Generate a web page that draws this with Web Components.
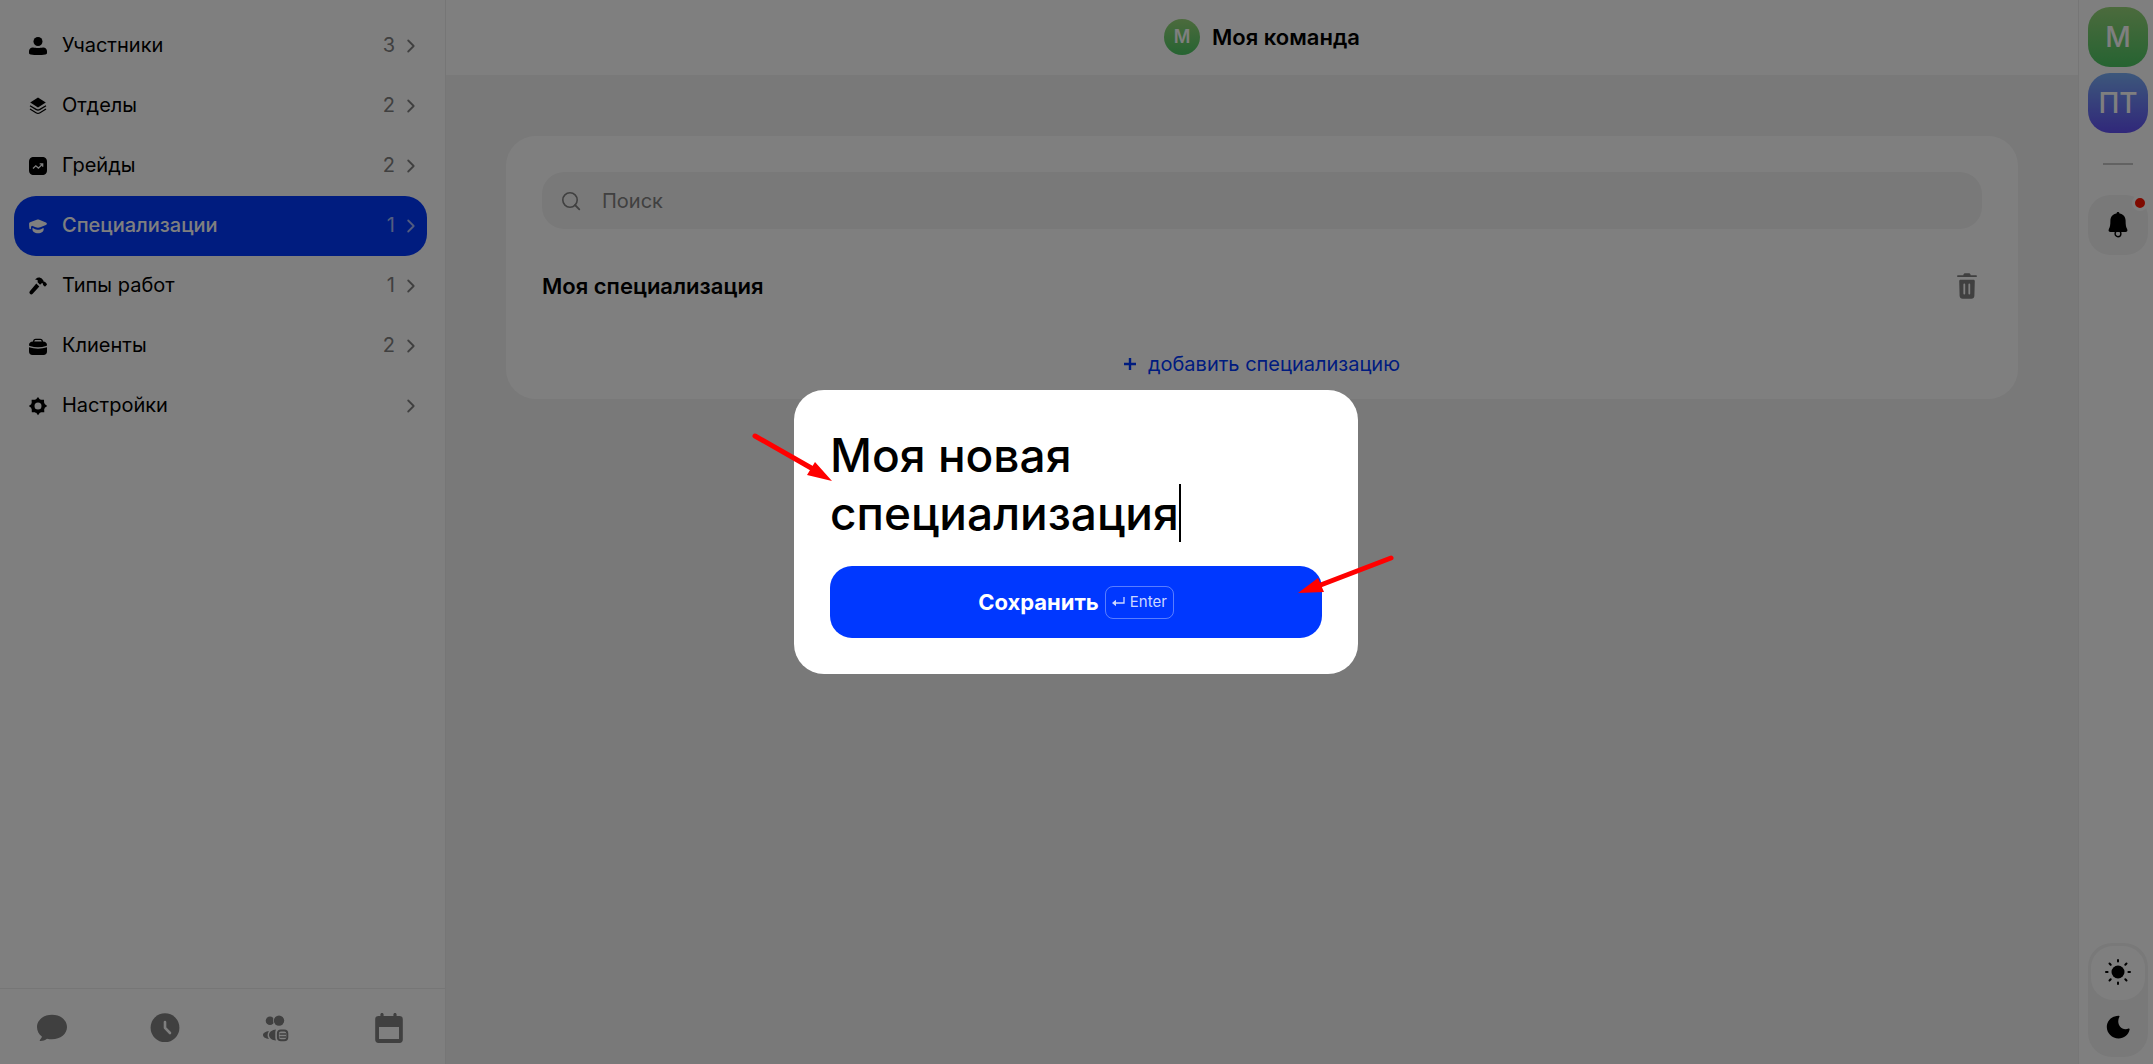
<!DOCTYPE html>
<html lang="ru">
<head>
<meta charset="utf-8">
<meta name="viewport" content="width=device-width, initial-scale=1">
<title>Моя команда</title>
<style>
  html, body { margin: 0; height: 100%; }
  body {
    font-family: Inter, "Liberation Sans", sans-serif;
    font-size: 20px; line-height: 24px; color: #000; background: #f3f3f3;
    --accent: #0038ff; --muted: #808080; --soft: #f3f3f3; --line: #ececec;
    --green: linear-gradient(#98d67a, #4cc764); --violet: linear-gradient(#7aaff7, #6150f5);
  }
</style>
</head>
<body>
<app-shell>
  <side-nav slot="nav">
    <nav-item icon="user" count="3">Участники</nav-item>
    <nav-item icon="layers" count="2">Отделы</nav-item>
    <nav-item icon="grade" count="2">Грейды</nav-item>
    <nav-item icon="cap" count="1" active>Специализации</nav-item>
    <nav-item icon="hammer" count="1">Типы работ</nav-item>
    <nav-item icon="case" count="2">Клиенты</nav-item>
    <nav-item icon="gear">Настройки</nav-item>
    <bottom-tabs slot="footer"></bottom-tabs>
  </side-nav>
  <team-header slot="header" initial="М">Моя команда</team-header>
  <spec-list>
    <spec-row>Моя специализация</spec-row>
  </spec-list>
  <team-rail slot="rail"></team-rail>
</app-shell>
<modal-layer>
  <name-dialog value="Моя новая специализация"></name-dialog>
  <pointer-marks slot="marks"></pointer-marks>
</modal-layer>

<script>
const ICONS = {
  user: ['0 0 18 18', '<circle cx="9" cy="4.5" r="4.5"/><path d="M0 14c0-2.300 2-3.800 4-3.600 1.800.1 3 .6 5 .6s3.200-.5 5-.6c2-.2 4 1.300 4 3.600v2c0 .9-.7 1.400-1.600 1.500C14 17.900 11.500 18 9 18s-5-.1-7.400-.5C.7 17.400 0 16.900 0 16z"/>'],
  layers: ['0 0 18 18', '<path d="M9 .6 16.800 5.500 9 10.600 1.200 5.500z"/><path d="M1 8.700 7 12.400c1.300.8 2.700.8 4 0l6-3.700M1 12l6 3.700c1.300.8 2.700.8 4 0l6-3.700" fill="none" stroke="currentColor" stroke-width="1.300"/>'],
  grade: ['0 0 18 18', '<path fill-rule="evenodd" d="M5 0h8c3.500 0 5 1.500 5 5v8c0 3.500-1.500 5-5 5H5c-3.500 0-5-1.500-5-5V5c0-3.500 1.500-5 5-5z"/><path d="M4 11.500 6.800 8.800l2.600 2.300 4-3.800M10.700 6.800h3v3" fill="none" stroke="#fff" stroke-width="1.300"/>'],
  cap: ['0 0 18 18', '<path d="M7.700 2.700c.8-.3 1.800-.3 2.600 0l6.600 2.700c1.300.6 1.300 2 0 2.600l-5.600 2.300c-1.400.6-3.200.6-4.600 0L3 8.800c-1 .6-1 1.200-1 2.700 0 .9-1.500.9-1.600 0C.2 9.500.1 9 .1 7c0-1 .3-1.400 1-1.700z"/><path d="M3.500 11c1 .3 2.400 1.200 3.600 1.500 1.400.3 2.600.3 4 0 1.200-.3 2.500-1.200 3.500-1.500.3 1.600 0 3-1.300 4-2.200 1.700-6.400 1.700-8.500 0-1.300-1-1.500-2.400-1.300-4z"/>'],
  hammer: ['0 0 19 18', '<path d="M7 1.600C9.600-.5 12-.2 13.900 1.700l1.300 1.500c.2.300 0 .8.300 1.100.5.500 1.100-.1 1.500.4l1.700 1.900c.4.500.3 1-.1 1.400l-1.200 1.200c-.5.500-1.100.4-1.500-.1l-1-1.200c-.5-.5.2-1-.3-1.500-.4-.4-1 0-1.400-.2l-1.500 1.500-2.800-2.800.5-1.200C9 2.600 8.200 2.500 7.200 2.500c-.6 0-.6-.6-.2-.9z"/><path d="m7.700 6.300 3.200 3.200-7 7.700c-.8.900-2.100.9-2.900.1-.8-.8-.8-2.100.1-2.900z"/>'],
  case: ['0 0 18 18', '<path fill-rule="evenodd" d="M4 4.600C4 2.800 5 1.700 6.800 1.700h4.400C13 1.700 14 2.800 14 4.600c2.400 0 4 1.500 4 3.400 0 .6-.3.900-.9 1.100-5 1.600-11.200 1.600-16.200 0C.3 8.900 0 8.600 0 8c0-1.900 1.600-3.400 4-3.400zm1.300 0h7.400c0-1-.6-1.600-1.500-1.600H6.800c-.9 0-1.500.6-1.500 1.600z"/><path d="M0 10.300c5.600 1.900 12.400 1.900 18 0v4.200c0 2.200-1.300 3.500-3.500 3.500h-11C1.300 18 0 16.700 0 14.500z"/>'],
  gear: ['0 0 18 18', '<path fill-rule="evenodd" d="M9 0l1.700 2.300c.5.100.9.300 1.300.5l3-.1.100 2.900c.3.500.5 1 .6 1.500L18.200 9l-2.400 1.800c-.1.500-.3 1-.6 1.400l.1 3-3 .1c-.5.300-.9.400-1.400.5L9 18.200l-1.800-2.400c-.5-.1-1-.3-1.400-.6l-3 .1-.1-3c-.300-.5-.4-1-.6-1.500L-.2 9l2.400-1.800c.1-.5.300-1 .5-1.500l-.1-3 3.100.1c.5-.2 1-.4 1.400-.5zM9 5.500a3.500 3.500 0 1 0 0 7 3.500 3.500 0 1 0 0-7z"/>'],
  chevron: ['0 0 8 14', '<path d="M1.200 1.500 6.700 7l-5.500 5.500" fill="none" stroke="currentColor" stroke-width="1.800" stroke-linecap="round" stroke-linejoin="round"/>'],
  chat: ['0 0 30 30', '<path d="M15 1.800c8.500 0 15 5.300 15 12.200s-6.500 12.300-15 12.300c-1.800 0-3.400-.2-5-.6-2 1.600-4.500 2.300-6.800 2.200-.6 0-.7-.6-.3-1 1-1 1.800-2.100 2-3.300C1.900 21.300 0 17.900 0 14 0 7.100 6.500 1.800 15 1.800z"/>'],
  clock: ['0 0 30 30', '<circle cx="15" cy="14.700" r="14.400"/><path d="M15 9v5.800l5 5.200" fill="none" stroke="#fff" stroke-width="2.600" stroke-linecap="round" stroke-linejoin="round"/>'],
  people: ['1 0 30 30', '<circle cx="9" cy="7.800" r="4.300"/><circle cx="18" cy="7.600" r="6" fill="#fff"/><circle cx="18" cy="7.600" r="5.200"/><path d="M8 18.300C4.500 18.400 2 20 2 22.100s2.500 3.700 6 3.800c-1.900-2-1.900-5.400 0-7.600z"/><path d="M15 16.600C11 17 8 19.200 8 22s3 5.200 7 5.600c-.5-1-.7-2-.7-3v-4.800c0-1.200.2-2.200.7-3.200z"/><rect x="16.900" y="17.400" width="9.400" height="9.800" rx="3" fill="none" stroke="currentColor" stroke-width="2"/><path d="M18.500 21.100h6.500M18.500 23.900h6.500" stroke="currentColor" stroke-width="1.500"/>'],
  calendar: ['0 0 30 30', '<path fill-rule="evenodd" d="M7 0c1 0 1.600.7 1.600 1.600V3h9.800V1.600C18.400.7 19 0 20 0s1.600.7 1.600 1.600V3h3c2 0 3.200 1.200 3.200 3.200v20.600c0 2-1.200 3.200-3.200 3.200H3.400C1.400 30 .2 28.800.2 26.800V6.200C.2 4.200 1.400 3 3.400 3h2V1.600C5.400.7 6 0 7 0zM4 14v12h20V14z"/>'],
  search: ['0 0 18 18', '<circle cx="8" cy="8" r="7.200" fill="none" stroke="currentColor" stroke-width="1.600"/><path d="m13 13 4.300 4.300" stroke="currentColor" stroke-width="1.800" stroke-linecap="round"/>'],
  trash: ['0 0 20 26', '<path d="M.8 2.300h5.500C6.500.9 7.200.3 8.300.3h3.400c1.100 0 1.800.6 2 2h5.500c1 0 1 1.800 0 1.800H.8c-1 0-1-1.800 0-1.800z"/><path fill-rule="evenodd" d="M3.500 6.700h13c.8 0 1.300.6 1.300 1.400l-.4 14.700c-.1 1.900-1.200 3-3 3H5.600c-1.800 0-2.900-1.100-3-3L2.200 8.100c0-.8.5-1.400 1.300-1.400zM7.300 10.500c-.6 0-.9.300-.9.900v9.200c0 .6.300.9.900.9s.9-.3.900-.9v-9.200c0-.6-.3-.9-.9-.9zm5 0c-.6 0-.9.300-.9.900v9.200c0 .6.300.9.900.9s.9-.3.900-.9v-9.200c0-.6-.3-.9-.9-.9z"/>'],
  bell: ['0 0 20 26', '<path d="M10 0c.9 0 1.500.6 1.500 1.600C15 2.200 17.600 5 17.600 8.500c0 4.500.4 6.500 1.500 8.500 1 2-.2 3-1.600 3h-15c-1.400 0-2.600-1-1.600-3 1.100-2 1.500-4 1.500-8.500C2.400 5 5 2.200 8.500 1.600 8.500.6 9.100 0 10 0z"/><circle cx="10" cy="21.800" r="2.900" fill="none" stroke="currentColor" stroke-width="1.400"/>'],
  sun: ['0 1 26 26', '<circle cx="13" cy="13" r="6.500"/><path d="M13 1v1.600M13 23.400V25M1 13h1.600M23.400 13H25M4.500 4.500l1.200 1.200M20.300 20.300l1.200 1.200M4.500 21.500l1.200-1.200M20.300 5.700l1.200-1.200" stroke="currentColor" stroke-width="2" stroke-linecap="round"/>'],
  moon: ['0 0 24 24', '<path d="M12.600.7c.8-.1 1.200.4.800 1.100C10.500 7 13.300 14 19.600 14.200c1.200 0 2-.2 2.900-.6.700-.3 1.300.1 1.100.9C22.500 19.900 18 23.400 12.600 23.400 6 23.400.8 18.300.8 12 .8 6 5.600.9 12.600.7z"/>'],
  enter: ['0 0 13 12', '<path d="M12 1v6H2" fill="none" stroke="currentColor" stroke-width="1.300"/><path d="M0 7l4-3.200v6.400z"/>']
};
const icon = (name, w, h = w) =>
  `<svg viewBox="${ICONS[name][0]}" width="${w}" height="${h}" fill="currentColor" aria-hidden="true">${ICONS[name][1]}</svg>`;

const BASE = `:host,*{box-sizing:border-box} svg{display:block;flex:none;overflow:visible}
  button,input,textarea{font:inherit;color:inherit;background:none;border:0;padding:0;margin:0;outline:0}
  button{cursor:pointer} a{color:inherit;text-decoration:none}`;

class BaseElement extends HTMLElement {
  connectedCallback() {
    if (this.shadowRoot) return;
    this.attachShadow({ mode: 'open' }).innerHTML = `<style>${BASE}${this.css()}</style>${this.html()}`;
  }
}

customElements.define('app-shell', class extends BaseElement {
  css() { return `:host{display:grid;grid-template-columns:446px minmax(0,1fr) 75px;min-height:100vh}
    .main{display:flex;flex-direction:column} main{padding:61px 60px}`; }
  html() { return `<slot name="nav"></slot><div class="main"><slot name="header"></slot><main><slot></slot></main></div><slot name="rail"></slot>`; }
});

customElements.define('side-nav', class extends BaseElement {
  css() { return `:host{display:flex;flex-direction:column;background:#fff;border-right:1px solid var(--line)}
    nav{flex:1;padding:16px 18px 0 14px}`; }
  html() { return `<nav aria-label="Разделы"><slot></slot></nav><slot name="footer"></slot>`; }
});

customElements.define('nav-item', class extends BaseElement {
  css() { return `:host{display:block}
    a{display:flex;align-items:center;height:60px;padding:0 12px 2px 15px;border-radius:22px}
    .label{flex:1;padding-left:15px}
    .count{color:var(--muted);margin-right:12px} .go{color:var(--muted)}
    .ic{padding-top:2px} .go{padding-top:2px}
    :host([active]) a{background:var(--accent);color:#fff} :host([active]) .label{font-weight:500}
    :host([active]) .count,:host([active]) .go{color:#a5b8ff}`; }
  html() {
    const count = this.getAttribute('count');
    return `<a href="#"${this.hasAttribute('active') ? ' aria-current="page"' : ''}><span class="ic">${icon(this.getAttribute('icon'), 18)}</span>
      <span class="label"><slot></slot></span>${count ? `<span class="count">${count}</span>` : ''}<span class="go">${icon('chevron', 8, 14)}</span></a>`;
  }
});

customElements.define('bottom-tabs', class extends BaseElement {
  css() { return `:host{display:block;border-top:1px solid var(--line)}
    nav{display:flex;align-items:center;justify-content:space-between;height:75px;padding:3px 40px 0 37px;color:var(--muted)}`; }
  html() {
    return `<nav aria-label="Быстрый доступ">` + [['chat', 'Чат'], ['clock', 'Время'], ['people', 'Команда'], ['calendar', 'Календарь']]
      .map(([i, t]) => `<a href="#" aria-label="${t}">${icon(i, 30)}</a>`).join('') + `</nav>`;
  }
});

customElements.define('team-header', class extends BaseElement {
  css() { return `:host{display:block;background:#fff}
    header{display:flex;align-items:center;justify-content:center;gap:12px;height:75px;padding-bottom:1px}
    .logo{display:grid;place-items:center;width:36px;height:36px;border-radius:50%;background:var(--green);color:#fff;font-size:18px;font-weight:600}
    h1{margin:0;font-size:22px;line-height:28px;font-weight:600}`; }
  html() { return `<header><span class="logo">${this.getAttribute('initial')}</span><h1><slot></slot></h1></header>`; }
});

customElements.define('spec-list', class extends BaseElement {
  css() { return `:host{display:block;background:#fff;border-radius:30px;padding:36px 36px 14px}
    label{display:flex;align-items:center;gap:22px;height:57px;padding:0 20px;border-radius:22px;background:var(--soft);color:var(--muted)}
    input{flex:1;min-width:0;height:100%} input::placeholder{color:var(--muted);opacity:1}
    .add{display:flex;justify-content:center}
    button{display:flex;align-items:center;gap:12px;height:42px;color:var(--accent)}`; }
  html() { return `<label>${icon('search', 18)}<input type="text" placeholder="Поиск" aria-label="Поиск"></label><slot></slot>
    <div class="add"><button type="button"><svg width="12" height="12" viewBox="0 0 12 12" aria-hidden="true"><path d="M6 0v12M0 6h12" stroke="currentColor" stroke-width="2.400"/></svg>добавить специализацию</button></div>`; }
});

customElements.define('spec-row', class extends BaseElement {
  css() { return `:host{display:flex;align-items:center;justify-content:space-between;height:114px;font-size:22px;line-height:28px;font-weight:600}
    button{display:grid;place-items:center;width:30px;height:30px;color:var(--muted)}`; }
  html() { return `<span><slot></slot></span><button type="button" aria-label="Удалить">${icon('trash', 20, 26)}</button>`; }
});

customElements.define('team-rail', class extends BaseElement {
  css() { return `:host{display:flex;flex-direction:column;align-items:center;gap:6px;background:#fff;border-left:1px solid var(--line);padding:7px 0 7px 4px}
    .tile{display:grid;place-items:center;width:60px;height:60px;border-radius:22px;color:#fff;font-size:28px;font-weight:500;position:relative}
    .green{background:var(--green)} .violet{background:var(--violet)}
    hr{width:30px;height:2px;border:0;margin:24px 0;background:#c4c4c4}
    .bell{background:var(--soft);color:#000}
    .dot{position:absolute;top:0;right:0;width:16px;height:16px;border:3px solid #fff;border-radius:50%;background:#ff1500}
    .theme{display:flex;flex-direction:column;width:60px;margin-top:auto;padding:3px;border-radius:24px;background:var(--soft)}
    .theme button{display:grid;place-items:center;height:54px;border-radius:22px} .theme .on{background:#fff}`; }
  html() { return `<button class="tile green" type="button">М</button><button class="tile violet" type="button">ПТ</button><hr>
    <button class="tile bell" type="button" aria-label="Уведомления">${icon('bell', 20, 26)}<span class="dot"></span></button>
    <div class="theme"><button class="on" type="button" aria-label="Светлая тема">${icon('sun', 26)}</button><button type="button" aria-label="Тёмная тема">${icon('moon', 24)}</button></div>`; }
});

customElements.define('modal-layer', class extends BaseElement {
  css() { return `:host{position:fixed;inset:0;display:flex;align-items:center;justify-content:center;padding-right:1px;background:rgba(0,0,0,.5)}
    .wrap{position:relative}`; }
  html() { return `<div class="wrap"><slot></slot><slot name="marks"></slot></div>`; }
});

customElements.define('name-dialog', class extends BaseElement {
  css() { return `:host{display:block;width:564px;max-width:100vw;background:#fff;border-radius:30px;padding:36px}
    form{display:flex;flex-direction:column;gap:24px;margin:0}
    .field{position:relative;display:flex}
    textarea{display:block;width:100%;height:116px;resize:none;overflow:hidden;font-size:46px;line-height:58px;font-weight:500}
    .caret{position:absolute;left:349px;bottom:0;width:2px;height:58px;background:#000}
    .save{display:flex;align-items:center;justify-content:center;gap:6px;height:72px;border-radius:22px;background:var(--accent);color:#fff;font-size:22px;line-height:28px;font-weight:700}
    kbd{display:flex;align-items:center;gap:5px;height:33px;padding:0 6px;border:1px solid rgba(255,255,255,.35);border-radius:8px;font:400 15px/20px Inter,"Liberation Sans",sans-serif;color:#ccd7ff}`; }
  html() { return `<form role="dialog" aria-modal="true" aria-label="Новая специализация"><div class="field"><textarea rows="2" spellcheck="false" aria-label="Название специализации">${this.getAttribute('value')}</textarea><span class="caret"></span></div>
    <button class="save" type="button">Сохранить<kbd>${icon('enter', 13, 12)}Enter</kbd></button></form>`; }
});

customElements.define('pointer-marks', class extends BaseElement {
  css() { return `:host{position:absolute;inset:0;pointer-events:none}`; }
  html() { return `<svg width="564" height="284" viewBox="0 0 564 284" aria-hidden="true" fill="#f00" stroke="#f00" stroke-width="5" stroke-linecap="round">
    <path d="M-39 46 19 79M597 168 524 196"/><path stroke="none" d="M38 91 21 72 13 85zM504 203 524 188 530 202z"/></svg>`; }
});
</script>
</body>
</html>
